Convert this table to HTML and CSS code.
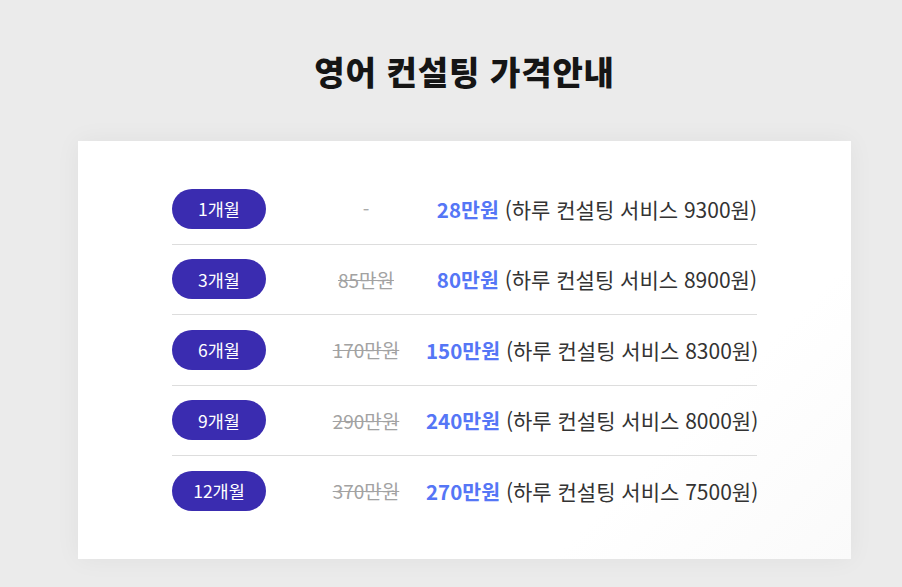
FILE: index.html
```html
<!DOCTYPE html>
<html lang="ko">
<head>
<meta charset="utf-8">
<title>영어 컨설팅 가격안내</title>
<link rel="stylesheet" href="styles.css">
</head>
<body>
<main class="page">
  <h1 class="title">영어 컨설팅 가격안내</h1>
  <section class="card">
    <ul class="list">
      <li class="row">
        <span class="pill">1개월</span>
        <span class="orig none">-</span>
        <span class="price"><b class="sale">28만원</b> (하루 컨설팅 서비스 9300원)</span>
      </li>
      <li class="row">
        <span class="pill">3개월</span>
        <span class="orig">85만원</span>
        <span class="price"><b class="sale">80만원</b> (하루 컨설팅 서비스 8900원)</span>
      </li>
      <li class="row">
        <span class="pill">6개월</span>
        <span class="orig">170만원</span>
        <span class="price"><b class="sale">150만원</b> (하루 컨설팅 서비스 8300원)</span>
      </li>
      <li class="row">
        <span class="pill">9개월</span>
        <span class="orig">290만원</span>
        <span class="price"><b class="sale">240만원</b> (하루 컨설팅 서비스 8000원)</span>
      </li>
      <li class="row">
        <span class="pill">12개월</span>
        <span class="orig">370만원</span>
        <span class="price"><b class="sale">270만원</b> (하루 컨설팅 서비스 7500원)</span>
      </li>
    </ul>
  </section>
</main>
</body>
</html>
```

FILE: styles.css
```css
html, body {
  margin: 0;
  padding: 0;
}
body {
  background: #ebebeb;
  font-family: "Noto Sans CJK KR", "Noto Sans", sans-serif;
  color: #333;
  height: 587px;
  overflow: hidden;
}
.page {
  width: 773px;
  margin-left: 78px;
  padding-top: 48px;
}
.title {
  margin: 0;
  text-align: center;
  font-size: 33px;
  line-height: 46px;
  font-weight: 900;
  color: #151515;
  letter-spacing: 0.8px;
}
.card {
  margin-top: 47px;
  height: 418px;
  box-sizing: border-box;
  background: linear-gradient(135deg, #ffffff 0%, #ffffff 75%, #fafafa 100%);
  box-shadow: 0 0 24px rgba(0, 0, 0, 0.05);
  padding: 33px 94px 0 94px;
}
.list {
  list-style: none;
  margin: 0;
  padding: 0;
}
.row {
  display: flex;
  align-items: center;
  height: 69.5px;
  border-bottom: 1px solid #dddddd;
}
.row:last-child {
  border-bottom: none;
}
.pill {
  flex: 0 0 94px;
  display: flex;
  align-items: center;
  justify-content: center;
  height: 40px;
  border-radius: 20px;
  background: #3a2cb0;
  color: #ffffff;
  font-size: 17.5px;
  font-weight: 400;
}
.orig {
  flex: 0 0 120px;
  margin-left: 40px;
  text-align: center;
  font-size: 19px;
  color: #a2a2a2;
  text-decoration: line-through;
}
.orig.none {
  text-decoration: none;
  color: #aaaaaa;
}
.price {
  flex: 1;
  min-width: 0;
  text-align: right;
  white-space: nowrap;
  font-size: 21px;
  color: #333333;
}
.sale {
  font-size: 20.5px;
  color: #5576f6;
  font-weight: 700;
}
```
